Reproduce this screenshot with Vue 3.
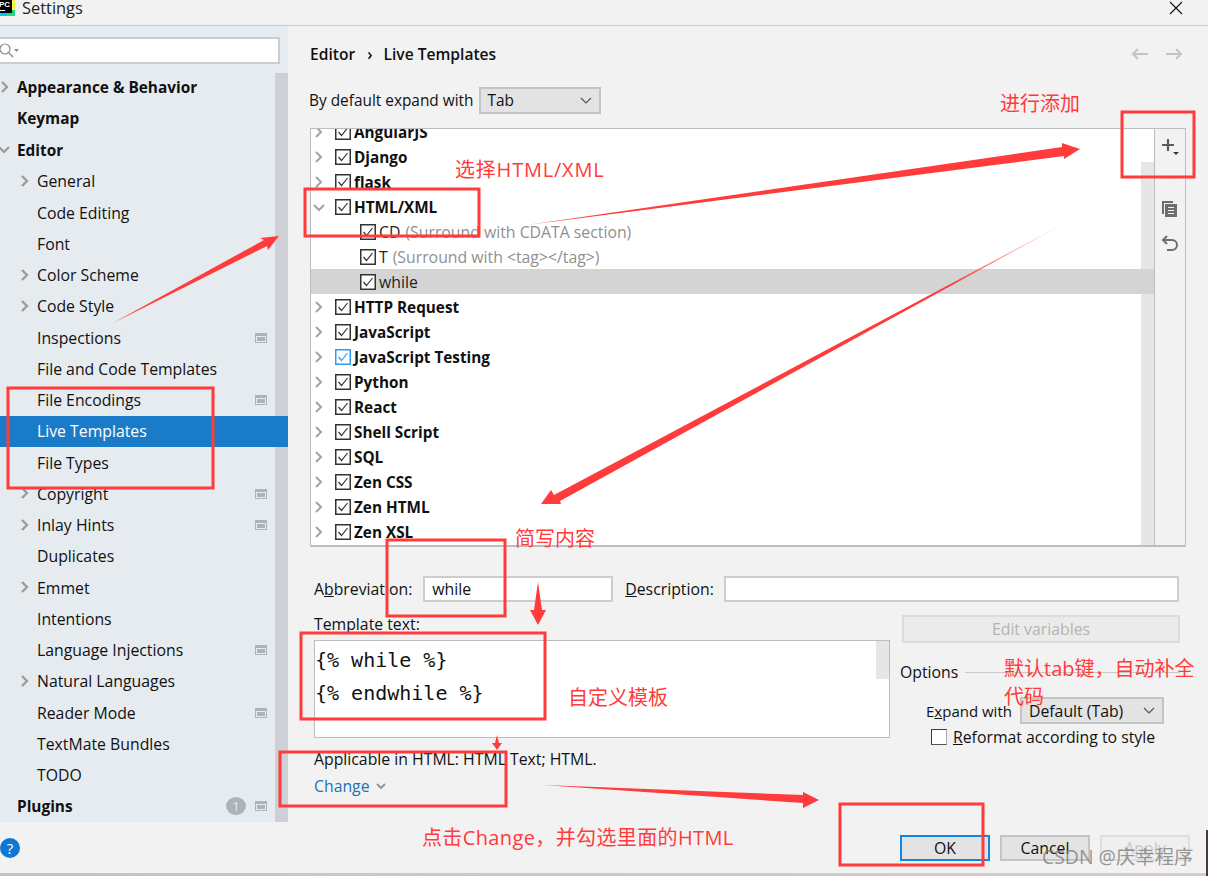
<script setup>
const nav = [
  { t: 'Appearance & Behavior', lvl: 0, chev: 'r', bold: true },
  { t: 'Keymap', lvl: 0, bold: true },
  { t: 'Editor', lvl: 0, chev: 'd', bold: true },
  { t: 'General', lvl: 1, chev: 'r' },
  { t: 'Code Editing', lvl: 1 },
  { t: 'Font', lvl: 1 },
  { t: 'Color Scheme', lvl: 1, chev: 'r' },
  { t: 'Code Style', lvl: 1, chev: 'r' },
  { t: 'Inspections', lvl: 1, proj: true },
  { t: 'File and Code Templates', lvl: 1 },
  { t: 'File Encodings', lvl: 1, proj: true },
  { t: 'Live Templates', lvl: 1, sel: true },
  { t: 'File Types', lvl: 1 },
  { t: 'Copyright', lvl: 1, chev: 'r', proj: true },
  { t: 'Inlay Hints', lvl: 1, chev: 'r', proj: true },
  { t: 'Duplicates', lvl: 1 },
  { t: 'Emmet', lvl: 1, chev: 'r' },
  { t: 'Intentions', lvl: 1 },
  { t: 'Language Injections', lvl: 1, proj: true },
  { t: 'Natural Languages', lvl: 1, chev: 'r' },
  { t: 'Reader Mode', lvl: 1, proj: true },
  { t: 'TextMate Bundles', lvl: 1 },
  { t: 'TODO', lvl: 1 },
  { t: 'Plugins', lvl: 0, bold: true, badge: '1', proj: true }
]
const tree = [
  { t: 'AngularJS', chev: 'r' },
  { t: 'Django', chev: 'r' },
  { t: 'flask', chev: 'r' },
  { t: 'HTML/XML', chev: 'd' },
  { t: 'CD', d: '(Surround with CDATA section)', child: true },
  { t: 'T', d: '(Surround with <tag></tag>)', child: true },
  { t: 'while', child: true, sel: true },
  { t: 'HTTP Request', chev: 'r' },
  { t: 'JavaScript', chev: 'r' },
  { t: 'JavaScript Testing', chev: 'r', blue: true },
  { t: 'Python', chev: 'r' },
  { t: 'React', chev: 'r' },
  { t: 'Shell Script', chev: 'r' },
  { t: 'SQL', chev: 'r' },
  { t: 'Zen CSS', chev: 'r' },
  { t: 'Zen HTML', chev: 'r' },
  { t: 'Zen XSL', chev: 'r' }
]
const boxes = [
  [1122, 112, 72, 65], [305, 189, 174, 47], [8, 388, 205, 100], [387, 540, 118, 76],
  [301, 633, 244, 86], [280, 752, 226, 54], [840, 804, 143, 61]
]
const arrows = [
  '527,225 1062,147 1062,143 1080,149 1064,159 1064,156',
  '113,323 264,240 260,238 279,236 268,250 267,246',
  '543,785 803,795 803,792 819,800 803,808 803,803',
  '538,582 542,610 546,610 538,625 530,610 534,610',
  '497,735 499,743 502,743 497,750 492,743 495,743'
]
</script>

<template>
  <div class="win">
    <header class="title">
      <svg class="logo" width="16" height="16" viewBox="0 0 16 16">
        <rect x="4" y="8" width="12" height="8" fill="#21d789" />
        <rect x="10" y="0" width="6" height="10" fill="#fcf84a" />
        <rect x="0" y="12" width="8" height="4" fill="#07c3f2" />
        <rect x="0" y="0" width="13" height="13" fill="#000" />
        <text x="0" y="7" class="logo-text">PC</text>
        <rect x="1" y="10" width="5" height="1" fill="#fff" />
      </svg>
      <span class="title-text">Settings</span>
      <svg class="close" width="14" height="14" viewBox="0 0 14 14">
        <path d="M1 1l12 12M13 1L1 13" stroke="#111" stroke-width="1.1" />
      </svg>
    </header>

    <div class="main">
      <aside class="side">
        <div class="search">
          <svg width="20" height="16" viewBox="0 0 20 16">
            <circle cx="5" cy="6" r="5" fill="none" stroke="#8c8c8c" stroke-width="1.2" />
            <path d="M9 10l4 4" stroke="#8c8c8c" stroke-width="1.4" />
            <path d="M14 6h5l-2.5 3z" fill="#8c8c8c" />
          </svg>
        </div>
        <div class="side-body">
          <ul class="nav">
            <li
              v-for="n in nav"
              :key="n.t"
              class="nav-row"
              :class="{ bold: n.bold, sel: n.sel, sub: n.lvl === 1 }"
            >
              <svg v-if="n.chev" class="nav-chev" width="10" height="12" viewBox="0 0 10 12">
                <path v-if="n.chev === 'r'" d="M2 1l5 5-5 5" fill="none" stroke="#9a9a9a" stroke-width="2.2" />
                <path v-else d="M-1 3l5 5 5-5" fill="none" stroke="#9a9a9a" stroke-width="2.2" />
              </svg>
              <span class="nav-text">{{ n.t }}</span>
              <span v-if="n.badge" class="badge">{{ n.badge }}</span>
              <svg v-if="n.proj" class="proj" width="12" height="10" viewBox="0 0 12 10">
                <rect x="0.5" y="0.5" width="11" height="9" fill="none" stroke="#a9b4bd" />
                <rect x="1" y="1" width="10" height="2" fill="#a9b4bd" />
                <rect x="2" y="4" width="8" height="4" fill="#a9b4bd" />
              </svg>
            </li>
          </ul>
          <div class="side-scroll"></div>
        </div>
      </aside>

      <section class="content">
        <div class="crumbs">
          <b>Editor</b>
          <span class="sep">›</span>
          <b>Live Templates</b>
          <svg class="back" width="18" height="14" viewBox="0 0 18 14">
            <path d="M17 7H2M7 2L2 7l5 5" fill="none" stroke="#c4c4c4" stroke-width="2" />
          </svg>
          <svg class="fwd" width="18" height="14" viewBox="0 0 18 14">
            <path d="M1 7h15M11 2l5 5-5 5" fill="none" stroke="#c4c4c4" stroke-width="2" />
          </svg>
        </div>

        <div class="expand-row">
          <span>By default expand with</span>
          <div class="combo wide">
            <span>Tab</span>
            <svg width="12" height="8" viewBox="0 0 12 8">
              <path d="M1 1l5 5 5-5" fill="none" stroke="#555" stroke-width="1.2" />
            </svg>
          </div>
        </div>

        <div class="list-box">
          <div class="tree-wrap">
            <div class="tree-scroll"></div>
            <ul class="tree">
              <li
                v-for="r in tree"
                :key="r.t"
                class="tree-row"
                :class="{ child: r.child, sel: r.sel }"
              >
                <svg v-if="r.chev" class="tree-chev" width="12" height="12" viewBox="0 0 12 12">
                  <path v-if="r.chev === 'r'" d="M3 1l5 5-5 5" fill="none" stroke="#a3a3a3" stroke-width="2" />
                  <path v-else d="M1 4l5 5 5-5" fill="none" stroke="#a3a3a3" stroke-width="2" />
                </svg>
                <svg class="check" width="16" height="16" viewBox="0 0 16 16">
                  <rect
                    x="0.75"
                    y="0.75"
                    width="14.5"
                    height="14.5"
                    fill="#fff"
                    :stroke="r.blue ? '#2f9bea' : '#333'"
                    stroke-width="1.5"
                  />
                  <path d="M3.5 8l3 3.5 6-7.5" fill="none" :stroke="r.blue ? '#2f9bea' : '#333'" stroke-width="1.2" />
                </svg>
                <span :class="r.child ? 'leaf' : 'group'">{{ r.t }}</span>
                <span v-if="r.d" class="desc">{{ r.d }}</span>
              </li>
            </ul>
          </div>
          <div class="tools">
            <svg class="tool-add" width="20" height="20" viewBox="0 0 20 20">
              <path d="M7 2v12M1 8h12" stroke="#5c5c5c" stroke-width="2.2" />
              <path d="M12 15h6l-3 3z" fill="#333" />
            </svg>
            <svg class="tool-minus" width="16" height="2" viewBox="0 0 16 2">
              <rect width="16" height="2" fill="#dcdcdc" />
            </svg>
            <svg class="tool-copy" width="18" height="18" viewBox="0 0 18 18">
              <path d="M1 1h11v2H3v11H1z" fill="#6e6e6e" />
              <path d="M4 4h12v13H4z" fill="#6e6e6e" />
              <path d="M7 7.5h6M7 10.5h6M7 13.5h6" stroke="#f2f2f2" stroke-width="1.2" />
            </svg>
            <svg class="tool-undo" width="18" height="18" viewBox="0 0 18 18">
              <path d="M2 5h9a4.5 4.5 0 0 1 0 10H6" fill="none" stroke="#6e6e6e" stroke-width="2" />
              <path d="M6 1L2 5l4 4" fill="none" stroke="#6e6e6e" stroke-width="2" />
            </svg>
          </div>
        </div>

        <div class="fields">
          <label>A<u>b</u>breviation:</label>
          <div class="input abbr">while</div>
          <label class="desc-label"><u>D</u>escription:</label>
          <div class="input grow"></div>
        </div>

        <div class="editor-area">
          <div class="editor-col">
            <div class="tt-label">Template text:</div>
            <div class="code-box">
              <div class="code">{% while %}</div>
              <div class="code">{% endwhile %}</div>
              <div class="code-scroll"></div>
            </div>
            <div class="applicable">Applicable in HTML: HTML Text; HTML.</div>
            <div class="change">
              Change
              <svg width="10" height="7" viewBox="0 0 10 7">
                <path d="M1 1l4 4 4-4" fill="none" stroke="#8a949c" stroke-width="1.8" />
              </svg>
            </div>
          </div>
          <div class="opt-col">
            <div class="btn-vars">Edit variables</div>
            <div class="opt-title"><span>Options</span><i></i></div>
            <div class="opt-row">
              <span class="opt-label">E<u>x</u>pand with</span>
              <div class="combo opt-combo">
                <span>Default (Tab)</span>
                <svg width="12" height="8" viewBox="0 0 12 8">
                  <path d="M1 1l5 5 5-5" fill="none" stroke="#555" stroke-width="1.2" />
                </svg>
              </div>
            </div>
            <div class="opt-check">
              <span class="box"></span>
              <span><u>R</u>eformat according to style</span>
            </div>
          </div>
        </div>
      </section>
    </div>

    <footer class="foot">
      <span class="help">?</span>
      <div class="btn ok">OK</div>
      <div class="btn">Cancel</div>
      <div class="btn off">Apply</div>
    </footer>
    <div class="edge"></div>
    <div class="edge-right"></div>

    <svg class="marks" width="1208" height="876" viewBox="0 0 1208 876">
      <defs>
        <linearGradient id="fade" gradientUnits="userSpaceOnUse" x1="1065" y1="223" x2="950" y2="285">
          <stop offset="0" stop-color="#ff3b3b" stop-opacity="0.1" />
          <stop offset="1" stop-color="#ff3b3b" />
        </linearGradient>
      </defs>
      <rect
        v-for="(b, i) in boxes"
        :key="i"
        :x="b[0]"
        :y="b[1]"
        :width="b[2]"
        :height="b[3]"
        fill="none"
        stroke="#ff3b3b"
        stroke-width="3"
      />
      <polygon v-for="a in arrows" :key="a" :points="a" fill="#ff3b3b" />
      <polygon points="1065,223 560,501 561,504 541,504 551,490 554,495" fill="url(#fade)" />
    </svg>
    <span class="note n1">进行添加</span>
    <span class="note n2">选择HTML/XML</span>
    <span class="note n3">简写内容</span>
    <span class="note n4">自定义模板</span>
    <span class="note n5">默认tab键，自动补全<br />代码</span>
    <span class="note n6">点击Change，并勾选里面的HTML</span>
    <span class="mark">CSDN @庆幸程序</span>
  </div>
</template>

<style>
html, body { margin: 0; padding: 0; background: #f2f2f2; }
</style>

<style scoped>
.win {
  position: relative;
  width: 1208px;
  height: 876px;
  overflow: hidden;
  background: #f2f2f2;
  font-family: "Open Sans", "Noto Sans CJK SC", sans-serif;
  font-size: 15.8px;
  color: #111;
}
ul { list-style: none; margin: 0; padding: 0; }
.title {
  display: flex;
  align-items: center;
  height: 25px;
  border-bottom: 1px solid #c9c9c9;
  background: #f2f2f2;
}
.logo { margin: -9px 0 0 -1px; }
.logo-text { font: 700 8px "Liberation Sans", sans-serif; fill: #fff; }
.title-text { margin: -10px 0 0 7px; font-size: 16.4px; color: #222; }
.close { margin: -9px 25px 0 auto; }
.main { display: flex; height: 796px; }
.side { width: 288px; flex: none; background: #e6ebf0; }
.search {
  display: flex;
  align-items: center;
  box-sizing: border-box;
  width: 282px;
  height: 27px;
  margin: 11px 0 0 -2px;
  padding-left: 2px;
  background: #fff;
  border: 2px solid #c9ced2;
  border-left: 0;
}
.side-body { display: flex; margin-top: 8px; }
.nav { flex: 1; min-width: 0; }
.nav-row {
  position: relative;
  display: flex;
  align-items: center;
  height: 31.25px;
  padding-left: 17px;
  padding-right: 8px;
}
.nav-row.sub { padding-left: 37px; }
.nav-row.bold { font-weight: 700; font-size: 15.4px; }
.nav-row.sel { background: #1a7cc8; color: #fff; margin-right: -13px; padding-right: 21px; }
.nav-chev { position: absolute; left: 0; top: 9px; }
.nav-row.sub .nav-chev { left: 20px; }
.nav-text { flex: 1; }
.badge {
  width: 20px;
  height: 18px;
  margin-right: 9px;
  border-radius: 50%;
  background: #a9b4bd;
  color: #e6ebf0;
  font-size: 13px;
  font-weight: 400;
  line-height: 18px;
  text-align: center;
}
.side-scroll { width: 13px; height: 749px; margin-top: 1px; background: #cdd1d6; }
.content { flex: 1; min-width: 0; padding: 0 22px; }
.crumbs { display: flex; align-items: center; height: 20px; margin-top: 18px; }
.crumbs b { font-weight: 600; font-size: 15.6px; }
.sep { margin: 0 11px 0 12px; font-weight: 600; }
.back { margin-left: auto; margin-right: 16px; }
.fwd { margin-right: 3px; }
.expand-row { display: flex; align-items: center; gap: 5px; height: 27px; margin: 23px 0 0 -1px; font-size: 15.4px; }
.combo {
  display: flex;
  align-items: center;
  justify-content: space-between;
  box-sizing: border-box;
  height: 27px;
  padding: 0 7px;
  background: #e3e3e3;
  border: 2px solid #c4c4c4;
}
.combo.wide { width: 122px; }
.list-box {
  display: flex;
  height: 419px;
  margin-top: 14px;
  box-sizing: border-box;
  background: #fff;
  border: 1px solid #bdbdbd;
  border-bottom-width: 2px;
}
.tree-wrap { position: relative; flex: 1; overflow: hidden; }
.tree { position: relative; margin-top: -10px; }
.tree-row { position: relative; display: flex; align-items: center; height: 25px; padding-left: 24px; }
.tree-row.child { padding-left: 49px; }
.tree-row.sel { background: #d4d4d4; }
.tree-chev { position: absolute; left: 2px; top: 7px; }
.check { flex: none; margin-right: 3px; }
.group { font-weight: 700; font-size: 15.3px; }
.leaf { color: #222; }
.desc { margin-left: 5px; color: #8f8f8f; }
.tree-scroll { position: absolute; top: 33px; right: 0; width: 13px; bottom: 0; background: #e6e6e6; }
.tools {
  display: flex;
  flex-direction: column;
  align-items: center;
  flex: none;
  width: 30px;
  background: #f2f2f2;
  border-left: 1px solid #bdbdbd;
}
.tool-add { margin: 8px 0 0 2px; }
.tool-minus { margin-top: 20px; }
.tool-copy { margin-top: 21px; }
.tool-undo { margin-top: 17px; }
.fields { display: flex; align-items: center; height: 26px; margin: 29px 7px 0 4px; }
.input {
  box-sizing: border-box;
  height: 26px;
  padding: 0 7px;
  line-height: 22px;
  background: #fff;
  border: 2px solid #cdcdcd;
}
.abbr { width: 190px; margin-left: 11px; }
.desc-label { margin: 0 10px 0 12px; }
.grow { flex: 1; }
.editor-area { display: flex; margin: 14px 6px 0 4px; }
.editor-col { width: 576px; flex: none; }
.tt-label { height: 24px; line-height: 17px; }
.code-box {
  position: relative;
  box-sizing: border-box;
  height: 98px;
  padding: 3px 0;
  background: #fff;
  border: 1px solid #bdbdbd;
}
.code { height: 33px; font: 20px/33px "DejaVu Sans Mono", monospace; color: #111; }
.code-scroll { position: absolute; top: 0; right: 0; width: 13px; height: 38px; background: #e6e6e6; }
.applicable { margin-top: 11px; line-height: 20px; }
.change { display: flex; align-items: center; gap: 6px; margin-top: 7px; line-height: 20px; color: #2470b3; }
.opt-col { flex: 1; margin: -1px 0 0 10px; }
.btn-vars {
  box-sizing: border-box;
  width: 278px;
  height: 28px;
  margin-left: 2px;
  line-height: 24px;
  text-align: center;
  color: #b4b4b4;
  background: #ebebeb;
  border: 2px solid #dcdcdc;
}
.opt-title { display: flex; align-items: center; gap: 7px; height: 20px; margin-top: 19px; }
.opt-title i { flex: 1; height: 1px; background: #c9c9c9; }
.opt-row { display: flex; align-items: center; gap: 8px; height: 27px; margin: 15px 0 0 26px; }
.opt-label { font-size: 15px; }
.opt-combo { width: 144px; }
.opt-check { display: flex; align-items: center; gap: 6px; height: 20px; margin: 3px 0 0 31px; }
.box { box-sizing: border-box; width: 16px; height: 16px; background: #fff; border: 1.5px solid #3c3c3c; border-right-color: #aaa; border-bottom-color: #555; }
.foot {
  position: relative;
  display: flex;
  justify-content: flex-end;
  gap: 10px;
  height: 51px;
  padding: 13px 18px 0 0;
  box-sizing: border-box;
}
.help {
  position: absolute;
  left: 0;
  top: 16px;
  width: 20px;
  height: 20px;
  border-radius: 50%;
  background: #0f76d4;
  color: #fff;
  font-size: 15px;
  line-height: 20px;
  text-align: center;
}
.btn {
  box-sizing: border-box;
  width: 90px;
  height: 26px;
  line-height: 22px;
  text-align: center;
  background: #e3e3e3;
  border: 2px solid #c4c4c4;
}
.btn.ok { border-color: #0f86e0; }
.btn.off { color: #c8c8c8; background: #efefef; border-color: #dedede; }
.edge { height: 3px; background: linear-gradient(90deg, #c4c4c4, #d9c9d2); }
.edge-right { position: absolute; top: 830px; right: 0; width: 2px; height: 46px; background: #4a3a3a; }
.marks { position: absolute; left: 0; top: 0; pointer-events: none; }
.note { position: absolute; color: #ff3b3b; font-size: 20px; line-height: 28px; white-space: nowrap; }
.n1 { left: 1000px; top: 90px; }
.n2 { left: 455px; top: 156px; letter-spacing: 0.8px; }
.n3 { left: 515px; top: 525px; }
.n4 { left: 568px; top: 684px; }
.n5 { left: 1004px; top: 655px; }
.n6 { left: 422px; top: 824px; letter-spacing: 0.37px; }
.mark { position: absolute; left: 1042px; top: 845px; color: rgba(120, 120, 120, 0.75); font-size: 19.4px; line-height: 24px; white-space: nowrap; }
</style>
